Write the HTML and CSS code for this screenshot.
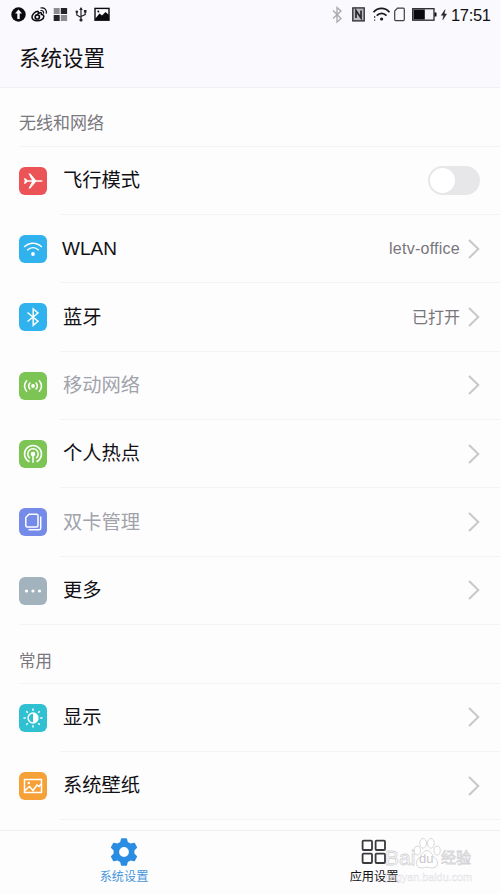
FILE: index.html
```html
<!DOCTYPE html>
<html lang="zh-CN">
<head>
<meta charset="utf-8">
<title>系统设置</title>
<link rel="stylesheet" href="styles.css">
</head>
<body>
<div class="screen">
  <header class="header">
    <div class="status">
      <svg class="status-left" width="102" height="20" viewBox="0 0 102 20">
        <circle cx="7.5" cy="9.5" r="7.2" fill="#0b0a0e"/>
        <path d="M7.5 4.5 L11 8.4 H8.7 V14 H6.3 V8.4 H4 Z" fill="#faf9fd"/>
        <g fill="none" stroke="#0b0a0e">
          <path d="M27 6.2C24 6.3 21 9.500 21 12c0 2.500 2.500 3.700 5.500 3.700s6.300-1.500 6.300-4.100c0-1.700-1.500-2.200-2.300-2.200.5-1.600-.8-2.300-3.300-1.100.5-1.500.2-2.100-.7-2.100Z" stroke-width="1.500"/>
          <path d="M29.500 5.600c2.200-.5 3.500 1 3 3M29.500 3c4-.9 6.600 2 5.800 5.700" stroke-width="1.200"/>
          <circle cx="26.300" cy="11.900" r="2.100" stroke-width="1.700"/>
        </g>
        <g fill="#242328"><rect x="49.800" y="3" width="6.300" height="6"/><rect x="42.700" y="10" width="6" height="6"/></g>
        <g fill="#8d8b90"><rect x="42.700" y="3" width="6" height="6"/><rect x="49.800" y="10" width="6.300" height="6"/></g>
        <g fill="none" stroke="#242328" stroke-width="1.200"><path d="M70 3.500V15M65.800 7v3L70 12.500M74.200 6.500v3L70 11.500"/></g>
        <g fill="#242328"><path d="M70 2l1.800 3h-3.600ZM72.900 5h2.600v2.600h-2.600Z"/><circle cx="65.800" cy="6.800" r="1.300"/><circle cx="70" cy="15" r="1.600"/></g>
        <rect x="84" y="3.400" width="14" height="11.800" fill="none" stroke="#0b0a0e" stroke-width="1.400"/>
        <path d="M84 14l4.500-5.500 2.500 2 3.500-3.500L98 10v5H84Z" fill="#0b0a0e"/><circle cx="87.300" cy="6.600" r="1" fill="#0b0a0e"/>
      </svg>
      <svg class="status-right" width="120" height="20" viewBox="0 0 120 20">
        <path d="M3 5.500l8 8L7 17V2.500l4 3.500-8 7.500" fill="none" stroke="#aaa8ae" stroke-width="1.300"/>
        <rect x="22.800" y="2.900" width="11.400" height="13" fill="#bbb9bf" stroke="#29282d" stroke-width="1.300"/>
        <path d="M26 13V5.500l5 7.500V5.500" fill="none" stroke="#29282d" stroke-width="1.700"/>
        <g fill="none" stroke="#1b1a1f" stroke-width="1.700"><path d="M43.500 7.200c4.500-5 11.500-5 16 0M46.700 10.700c2.800-3 7-3 9.800 0"/></g>
        <circle cx="51.600" cy="14" r="1.600" fill="#1b1a1f"/><path d="M44 11h1.300v2H44ZM44 14.500h1.300v1.300H44Z" fill="#555"/>
        <path d="M67.500 3.200h5.800q1 0 1 1v10.400q0 1-1 1h-7.600q-1 0-1-1V6Z" fill="none" stroke="#3f3e43" stroke-width="1.200"/>
        <rect x="82.700" y="3.700" width="21.300" height="11.500" fill="#f5f4f8" stroke="#29282d" stroke-width="1.300"/>
        <path d="M83.500 4.500H94.800V14.500H83.500ZM104.500 7.500h2v4h-2Z" fill="#0b0a0e"/>
        <path d="M115 4.700l-3.700 5.600h2.300l-.8 4.500 3.800-5.800h-2.300Z" fill="#29282d" stroke="#29282d" stroke-width=".5"/>
      </svg>
      <span class="clock">17:51</span>
    </div>
    <h1>系统设置</h1>
  </header>

  <main class="content">
    <h2>无线和网络</h2>
    <ul>
      <li><svg class="icon red" viewBox="0 0 28 28"><path d="M4.800 11.300l2 .1 1.600 1.900 4.600-.1L9.500 6.500l1.800.1 5.700 6.700h5.300q1.400.2 1.400.7t-1.400.7H17l-5.700 6.700-1.800.1 3.500-6.700-4.600-.1-1.600 1.900-2 .1 1-2.700Z" fill="#fff"/></svg><div class="row"><span class="name">飞行模式</span><i class="toggle"></i></div></li>
      <li><svg class="icon blue" viewBox="0 0 28 28"><g class="line"><path d="M5.200 12c5-5 12.600-5 17.600 0M8.200 15.300c3.500-3.300 8.100-3.300 11.600 0"/></g><circle cx="14" cy="19" r="1.900" fill="#fff"/></svg><div class="row"><span class="name latin">WLAN</span><span class="value latin">letv-office</span><svg class="arrow" viewBox="0 0 12 20"><path d="M1 1l9.300 9L1 19"/></svg></div></li>
      <li><svg class="icon blue" viewBox="0 0 28 28"><path class="line" d="M8.500 9.500l10.500 8.700-4.800 4.200V5.800L19 10 8.500 18.500"/></svg><div class="row"><span class="name">蓝牙</span><span class="value">已打开</span><svg class="arrow" viewBox="0 0 12 20"><path d="M1 1l9.300 9L1 19"/></svg></div></li>
      <li class="off"><svg class="icon green" viewBox="0 0 28 28"><path class="line" d="M8 8.300q-5 5.700 0 11.400M11.300 10.500q-3.300 3.500 0 7M20 8.300q5 5.700 0 11.400M16.700 10.500q3.300 3.500 0 7"/><circle cx="14" cy="14" r="1.900" fill="#fff"/></svg><div class="row"><span class="name">移动网络</span><svg class="arrow" viewBox="0 0 12 20"><path d="M1 1l9.300 9L1 19"/></svg></div></li>
      <li><svg class="icon green" viewBox="0 0 28 28"><path class="line" d="M10.500 21.700a8.500 8.500 0 1 1 7 0M11 18.200a5.200 5.200 0 1 1 6 0M14 14v8.700"/><circle cx="14" cy="14" r="2.300" fill="#fff"/></svg><div class="row"><span class="name">个人热点</span><svg class="arrow" viewBox="0 0 12 20"><path d="M1 1l9.300 9L1 19"/></svg></div></li>
      <li class="off"><svg class="icon violet" viewBox="0 0 28 28"><path class="line" d="M10 6.300h7.500q1.500 0 1.500 1.500v9.700q0 1.500-1.500 1.500H8.300q-1.500 0-1.500-1.500V9.500ZM21.700 8.500v11.700q0 1.500-1.500 1.500H9.500"/></svg><div class="row"><span class="name">双卡管理</span><svg class="arrow" viewBox="0 0 12 20"><path d="M1 1l9.300 9L1 19"/></svg></div></li>
      <li class="last"><svg class="icon gray" viewBox="0 0 28 28"><g fill="#fff"><circle cx="7.500" cy="14" r="1.600"/><circle cx="14" cy="14" r="1.600"/><circle cx="20.500" cy="14" r="1.600"/></g></svg><div class="row"><span class="name">更多</span><svg class="arrow" viewBox="0 0 12 20"><path d="M1 1l9.300 9L1 19"/></svg></div></li>
    </ul>
    <h2 class="common">常用</h2>
    <ul>
      <li><svg class="icon teal" viewBox="0 0 28 28"><circle cx="14" cy="14" r="4.900" class="line"/><path d="M14 9a5 5 0 0 1 0 10Z" fill="#fff"/><path class="line" d="M14 4.500v2.200M14 21.300v2.200M4.500 14h2.200M21.300 14h2.200M7.300 7.300l1.500 1.500M19.200 19.200l1.500 1.500M7.300 20.700l1.500-1.500M19.200 8.800l1.500-1.500"/></svg><div class="row"><span class="name">显示</span><svg class="arrow" viewBox="0 0 12 20"><path d="M1 1l9.300 9L1 19"/></svg></div></li>
      <li><svg class="icon orange" viewBox="0 0 28 28"><path class="line" d="M5.500 7.500h17v13h-17ZM6 18.500l4.500-4 3.500 4 4-5.500 2 1.500 2-2.500"/><circle cx="9.800" cy="11" r="1.200" fill="#fff"/></svg><div class="row"><span class="name">系统壁纸</span><svg class="arrow" viewBox="0 0 12 20"><path d="M1 1l9.300 9L1 19"/></svg></div></li>
    </ul>
  </main>

  <nav class="tabs">
    <div class="tab active">
      <svg width="28" height="28" viewBox="0 0 28 28"><path fill="#2a8de2" fill-rule="evenodd" d="M10.200 4 L11 .8 Q11.200 .3 11.800 .3 H16.200 Q16.800 .3 17 .8 L17.800 4 L20.600 5.600 L23.900 4.700 Q24.500 4.600 24.800 5.100 L27 8.900 Q27.300 9.500 26.800 10 L24.400 12.400 V15.600 L26.800 18 Q27.300 18.500 27 19.100 L24.800 22.900 Q24.500 23.400 23.900 23.300 L20.600 22.400 L17.800 24 L17 27.200 Q16.800 27.700 16.200 27.700 H11.800 Q11.200 27.700 11 27.200 L10.200 24 L7.400 22.400 L4.100 23.300 Q3.500 23.400 3.200 22.900 L1 19.100 Q.7 18.500 1.200 18 L3.600 15.600 V12.400 L1.200 10 Q.7 9.500 1 8.900 L3.200 5.100 Q3.500 4.600 4.100 4.700 L7.400 5.600 Z M14 9.100 A4.900 4.900 0 1 0 14 18.900 A4.900 4.900 0 1 0 14 9.100Z"/></svg>
      <span>系统设置</span>
    </div>
    <div class="tab">
      <svg width="28" height="28" viewBox="0 0 28 28"><g fill="none" stroke="#3a393d" stroke-width="1.800"><rect x="2.600" y="2.600" width="9.400" height="9.400" rx="1"/><rect x="15.600" y="2.600" width="9.400" height="9.400" rx="1"/><rect x="2.600" y="15.600" width="9.400" height="9.400" rx="1"/><rect x="15.600" y="15.600" width="9.400" height="9.400" rx="1"/></g></svg>
      <span>应用设置</span>
    </div>
  </nav>

  <div class="watermark">
    <div class="brand"><span class="bai">Bai</span><span class="paw"><svg width="28" height="34" viewBox="0 0 29 35"><g fill="#fff" stroke="#d5d4d7" stroke-width="1"><ellipse cx="4.500" cy="15" rx="3.200" ry="4.500"/><ellipse cx="10.500" cy="7.500" rx="3.500" ry="5"/><ellipse cx="18.500" cy="7.500" rx="3.500" ry="5"/><ellipse cx="25" cy="15" rx="3.200" ry="4.500"/><path d="M14.500 15c4.500 0 5 5 9 8.500 4 4 1.500 9.500-3.500 9.500-3 0-3-.8-5.500-.8S12 33 9 33c-5 0-7.500-5.500-3.500-9.500 4-3.500 4.500-8.500 9-8.500Z"/></g></svg><b>du</b></span><span class="cn">经验</span></div>
    <div class="url">jingyan.baidu.com</div>
  </div>
</div>
</body>
</html>
```
FILE: styles.css
```css
* { box-sizing: border-box; }
body { margin: 0; background: #fefdfe; font-family: "Liberation Sans", "Noto Sans CJK SC", sans-serif; color: #111014; }
.screen { position: relative; width: 501px; height: 894px; overflow: hidden; display: flex; flex-direction: column; padding-right: 1px; }
.header { height: 87.500px; flex: none; background: #faf9fd; border-bottom: 1px solid #f0eff2; }
.status { height: 29px; display: flex; align-items: center; padding: 0 9px 0 11px; }
.status-right { margin-left: auto; }
.clock { width: 40px; font-size: 16.500px; line-height: 20px; letter-spacing: -.35px; margin: 1px 0 0 1px; white-space: nowrap; }
h1 { margin: 13px 0 0 19px; font-size: 21.500px; line-height: 34px; font-weight: 400; }
h2 { height: 59px; margin: 0 0 0 19px; padding-top: 23px; font-size: 17px; line-height: 26px; font-weight: 400; color: #79787c; border-bottom: 1px solid #f3f2f4; }
.common { height: 58.700px; font-size: 16.500px; }
ul { margin: 0; padding: 0; list-style: none; }
li { height: 68.360px; display: flex; align-items: center; padding-left: 19px; }
.row { flex: 1; height: 100%; display: flex; align-items: center; margin-left: 13px; padding: 0 20px 0 3px; border-bottom: 1px solid #f3f2f4; }
.last { position: relative; }
.last::after { content: ""; position: absolute; left: 19px; bottom: 0; width: 41px; height: 1px; background: #f3f2f4; }
.name { flex: 1; padding-top: 1.500px; font-size: 19.300px; line-height: 28px; }
.name.latin { padding-top: 0; font-size: 19px; margin-left: -1px; }
.off .name { color: #a0a3ab; }
.value { font-size: 16px; color: #77767a; margin: 0 8px 2px 0; }
.value.latin { letter-spacing: .25px; margin-bottom: 0; }
.icon { width: 28px; height: 28px; border-radius: 6px; flex: none; }
.line { fill: none; stroke: #fff; stroke-width: 1.500; }
.red { background: #ec5356; }
.blue { background: #2fb2ee; }
.green { background: #7cc554; }
.violet { background: #748bea; }
.gray { background: #a3b3be; }
.teal { background: #2fc1d2; }
.orange { background: #f6a137; }
.arrow { width: 12px; height: 20px; flex: none; }
.arrow path { fill: none; stroke: #c8c7ca; stroke-width: 2; }
.toggle { width: 52px; height: 29px; border-radius: 15px; background: #e7e7ea; padding: 2px; }
.toggle::before { content: ""; display: block; width: 25px; height: 25px; border-radius: 50%; background: #fff; }
.tabs { height: 64px; margin-top: auto; flex: none; display: flex; background: #fefdfe; border-top: 1px solid #efeef1; }
.tab { flex: 1; display: flex; flex-direction: column; align-items: center; padding: 7px 2px 0 0; font-size: 12.200px; line-height: 20px; }
.tab span { margin-top: 1px; }
.active { color: #4495dc; }
.watermark { position: absolute; left: 385px; top: 835px; width: 90px; color: #fff; }
.brand { height: 36px; display: flex; align-items: flex-end; font-size: 21px; line-height: 26px; -webkit-text-stroke: .8px #d5d4d7; white-space: nowrap; }
.bai { width: 28px; }
.paw { width: 28px; height: 35px; flex: none; position: relative; }
.paw svg { display: block; }
.paw b { position: absolute; left: 6px; top: 14px; font-size: 13px; line-height: 18px; font-weight: 400; color: #c9c8cb; -webkit-text-stroke-width: 0; }
.cn { width: 32px; font-size: 15px; }
.url { margin-top: 1px; font-size: 10.800px; line-height: 10px; color: rgba(255,255,255,.6); -webkit-text-stroke: .5px rgba(220,219,222,.8); }
```
